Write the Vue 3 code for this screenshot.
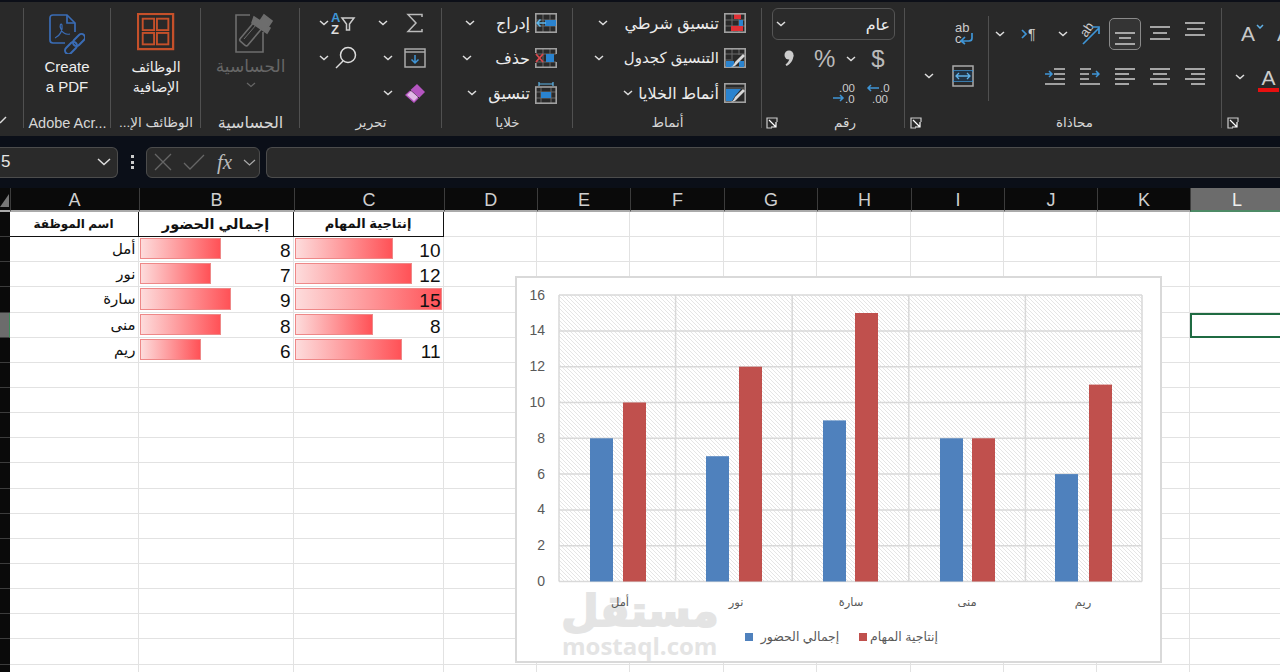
<script setup>
const colLetters = ['A','B','C','D','E','F','G','H','I','J','K','L']
const rowCount = 19
const tableHead = ['اسم الموظفة','إجمالي الحضور','إنتاجية المهام']
const people = [
  { name: 'أمل', a: 8, t: 10 },
  { name: 'نور', a: 7, t: 12 },
  { name: 'سارة', a: 9, t: 15 },
  { name: 'منى', a: 8, t: 8 },
  { name: 'ريم', a: 6, t: 11 }
]
const rows = Array.from({ length: rowCount }, (_, i) => i)
const blankCols = colLetters.slice(3)
const ticks = [16,14,12,10,8,6,4,2,0]
const tickY = v => 305.5 - v * 17.9
const catX = [44,160.6,277.2,393.8,510.4,627]
const blueX = [75,191,308,425,540]
const redX = [108,224,340,457,574]
const alignTop = [
  { cls: 'btn on', ys: [14,19,25], mid: [4,16] },
  { cls: 'btn', ys: [8,14,20], mid: [3,17] },
  { cls: 'btn', ys: [4,10,16], mid: [2,18] }
]
const alignBottom = [
  [[0,20],[0,14],[0,20],[0,14]],
  [[0,20],[3,17],[0,20],[3,17]],
  [[0,20],[6,20],[0,20],[6,20]]
]
</script>

<template>
  <div class="app">
    <div class="ribbon">
      <section class="group g0">
        <div class="body"></div>
        <svg class="cutmark" width="8" height="10"><path d="M0 8l6-6" stroke="#ddd" stroke-width="1.4" fill="none"/></svg>
      </section>

      <section class="group g1">
        <div class="body big">
          <svg width="36" height="40" viewBox="0 0 36 40" fill="none" stroke="#3a6cb5" stroke-width="1.700">
            <path d="M26 18V9l-8-8H4Q1 1 1 4v22q0 3 3 3h12"/><path d="M18 1v8h8"/>
            <path d="M6 24c5-2 8-8 7-13-1-2-3 0-1 4 1 3 4 6 9 5" stroke-width="1.200"/>
            <rect x="23" y="22.500" width="14" height="7" rx="3.500" transform="rotate(-45 30 26)" stroke-width="2"/>
            <rect x="15" y="30.500" width="14" height="7" rx="3.500" transform="rotate(-45 22 34)" stroke-width="2"/>
          </svg>
          <span class="bigtext">Create<br>a PDF</span>
        </div>
        <div class="label lat">Adobe Acr...</div>
      </section>

      <section class="group g2">
        <div class="body big">
          <svg width="38" height="38" viewBox="0 0 40 40" fill="none" stroke="#c5502a" stroke-width="2">
            <rect x="1" y="1" width="37" height="37" stroke-width="2.4"/>
            <rect x="6" y="6" width="12" height="12"/><rect x="21" y="6" width="12" height="12"/>
            <rect x="6" y="21" width="12" height="12"/><rect x="21" y="21" width="12" height="12"/>
          </svg>
          <span class="bigtext ar" dir="rtl">الوظائف<br>الإضافية</span>
        </div>
        <div class="label" dir="rtl">الوظائف الإ...</div>
      </section>

      <section class="group g3">
        <div class="body big dim">
          <svg class="sens" width="38" height="40" viewBox="0 0 38 40" fill="none" stroke="#6d6d6d" stroke-width="1.600">
            <path d="M15 2H1v37h27V19"/>
            <rect x="3" y="15" width="27" height="10" rx="2" transform="rotate(-50 16.500 20)"/>
            <path d="M9 26l12-14" stroke-width="1"/>
            <path d="M19 4l6 4 4-6 8 6-4 6 2 1-3 5-15-10z" fill="#6d6d6d"/>
          </svg>
          <span class="bigtext ar dimtext" dir="rtl">الحساسية</span>
          <svg class="chev dimchev" width="10" height="6"><path d="M1 1l4 3.5L9 1" stroke="#666" stroke-width="1.2" fill="none"/></svg>
        </div>
        <div class="label wide" dir="rtl">الحساسية</div>
      </section>

      <section class="group g4">
        <div class="body edit">
          <svg class="chev" width="10" height="6"><path d="M1 1l4 3.5L9 1" stroke="#ddd" stroke-width="1.5" fill="none"/></svg>
          <svg width="26" height="26" viewBox="0 0 26 26">
            <text x="1" y="12" class="az blue">A</text><text x="1" y="24" class="az">Z</text>
            <path d="M12 8h12l-4.500 6v6h-3v-6z" fill="none" stroke="#ccc" stroke-width="1.500"/>
          </svg>
          <span></span>
          <svg class="chev shiftl" width="10" height="6"><path d="M1 1l4 3.5L9 1" stroke="#ddd" stroke-width="1.5" fill="none"/></svg>
          <svg width="18" height="20" viewBox="0 0 18 20"><path d="M16 4V1.500H2l8 8.500-8 8.500h14V16" fill="none" stroke="#bbb" stroke-width="1.500"/></svg>

          <svg class="chev" width="10" height="6"><path d="M1 1l4 3.5L9 1" stroke="#ddd" stroke-width="1.5" fill="none"/></svg>
          <svg class="mag" width="24" height="24" viewBox="0 0 24 24" fill="none" stroke="#ddd" stroke-width="1.500"><circle cx="14" cy="9" r="7.500"/><path d="M9 15l-7 7"/></svg>
          <span></span>
          <svg class="chev" width="10" height="6"><path d="M1 1l4 3.5L9 1" stroke="#ddd" stroke-width="1.5" fill="none"/></svg>
          <svg width="22" height="20" viewBox="0 0 22 20" fill="none" stroke="#aaa" stroke-width="1.500"><rect x="1" y="1" width="20" height="18"/><path d="M1 4h20"/><path d="M11 7v8M7.500 11.500l3.500 3.500 3.500-3.500" stroke="#3f95d6"/></svg>

          <span></span><span></span><span></span>
          <svg class="chev" width="10" height="6"><path d="M1 1l4 3.500L9 1" stroke="#ddd" stroke-width="1.5" fill="none"/></svg>
          <svg width="22" height="20" viewBox="0 0 22 20"><path d="M1 12l9 8 11-11-8-8z" fill="#b455c0"/><path d="M6 7l9 8" stroke="#2a2a2a" stroke-width="1"/><path d="M3 12l7 6 4-4-7-6z" fill="#e0b8e6"/></svg>
        </div>
        <div class="label" dir="rtl">تحرير</div>
      </section>

      <section class="group g5">
        <div class="body lists">
          <div class="li w1">
            <svg class="chev" width="10" height="6"><path d="M1 1l4 3.5L9 1" stroke="#ddd" stroke-width="1.5" fill="none"/></svg>
            <span class="txt" dir="rtl">إدراج</span>
            <svg width="22" height="20" viewBox="0 0 22 20"><path d="M8 1v18M15 1v18M1 7h20M1 13h20" stroke="#6a6a6a"/><rect x=".8" y=".8" width="20.400" height="18.400" fill="none" stroke="#a0a0a0" stroke-width="1.600"/><rect x="10" y="7" width="11" height="6" fill="#2a83cf"/><path d="M11 10H2M5.500 6.500L2 10l3.500 3.500" stroke="#5fb6ea" stroke-width="1.500" fill="none"/></svg>
          </div>
          <div class="li w2">
            <svg class="chev" width="10" height="6"><path d="M1 1l4 3.5L9 1" stroke="#ddd" stroke-width="1.5" fill="none"/></svg>
            <span class="txt" dir="rtl">حذف</span>
            <svg width="22" height="20" viewBox="0 0 22 20"><path d="M8 1v18M15 1v18M1 6h20M1 14h20" stroke="#6a6a6a"/><path d="M.8 5V.8h20.400V6M21.200 14v5.200H.8V15" fill="none" stroke="#a0a0a0" stroke-width="1.600"/><rect x="11" y="6" width="8" height="8" fill="#2a83cf"/><path d="M1 6l7 8M8 6l-7 8" stroke="#d9484d" stroke-width="1.800"/></svg>
          </div>
          <div class="li w3">
            <svg class="chev" width="10" height="6"><path d="M1 1l4 3.5L9 1" stroke="#ddd" stroke-width="1.5" fill="none"/></svg>
            <span class="txt" dir="rtl">تنسيق</span>
            <svg width="22" height="22" viewBox="0 0 22 22"><path d="M1 10h20M1 16h20M6 5v16M16 5v16" stroke="#6a6a6a"/><rect x=".8" y="5" width="20.400" height="16.200" fill="none" stroke="#a0a0a0" stroke-width="1.600"/><rect x="6" y="10" width="10" height="6" fill="#2a83cf"/><path d="M4 2h14M4 0v4M18 0v4" stroke="#5fb6ea" stroke-width="1.200"/></svg>
          </div>
        </div>
        <div class="label" dir="rtl">خلايا</div>
      </section>

      <section class="group g6">
        <div class="body lists">
          <div class="li s1">
            <svg class="chev" width="10" height="6"><path d="M1 1l4 3.5L9 1" stroke="#ddd" stroke-width="1.5" fill="none"/></svg>
            <span class="txt" dir="rtl">تنسيق شرطي</span>
            <svg width="22" height="20" viewBox="0 0 22 20"><path d="M8 1v18M15 1v18M1 7h20M1 13h20" stroke="#6a6a6a"/><rect x="10" y="1" width="7" height="5" fill="#e03035"/><rect x="15" y="7" width="4" height="6" fill="#2a83cf"/><rect x="7" y="13" width="12" height="5" fill="#e03035"/><rect x=".8" y=".8" width="20.400" height="18.400" fill="none" stroke="#a0a0a0" stroke-width="1.600"/></svg>
          </div>
          <div class="li s2">
            <svg class="chev" width="10" height="6"><path d="M1 1l4 3.5L9 1" stroke="#ddd" stroke-width="1.5" fill="none"/></svg>
            <span class="txt" dir="rtl">التنسيق كجدول</span>
            <svg width="22" height="20" viewBox="0 0 22 20"><path d="M8 1v10M15 1v6M1 6h20M1 12h8" stroke="#6a6a6a"/><rect x=".8" y=".8" width="20.400" height="18.400" fill="none" stroke="#a0a0a0" stroke-width="1.600"/><path d="M2 13h8v6H2zM15 13h5v6h-5z" fill="#2a83cf"/><path d="M5 19c3 0 5-2 6-5l8-8 2 2-8 8c-1 2-4 3-8 3z" fill="#d8d8d8"/></svg>
          </div>
          <div class="li s3">
            <svg class="chev" width="10" height="6"><path d="M1 1l4 3.5L9 1" stroke="#ddd" stroke-width="1.5" fill="none"/></svg>
            <span class="txt" dir="rtl">أنماط الخلايا</span>
            <svg width="22" height="20" viewBox="0 0 22 20"><rect x=".8" y=".8" width="20.400" height="18.400" fill="none" stroke="#a0a0a0" stroke-width="1.600"/><path d="M1 5h20" stroke="#6a6a6a"/><path d="M2 6h15l-6 7-3 5H2z" fill="#2a83cf"/><path d="M5 19c3 0 5-2 6-5l8-8 2 2-8 8c-1 2-4 3-8 3z" fill="#d8d8d8"/></svg>
          </div>
        </div>
        <div class="label" dir="rtl">أنماط</div>
      </section>

      <section class="group g7">
        <div class="body num">
          <div class="select">
            <svg class="chev" width="10" height="6"><path d="M1 1l4 3.5L9 1" stroke="#ddd" stroke-width="1.5" fill="none"/></svg>
            <span class="txt" dir="rtl">عام</span>
          </div>
          <div class="numrow n2">
            <svg class="comma" width="12" height="20" viewBox="0 0 12 20"><circle cx="6" cy="6" r="4.500" fill="#ccc"/><path d="M10.500 6c0 5-3 9-7 11l-1-1.500c3-2 4-5 4-7z" fill="#ccc"/></svg>
            <span class="pct">%</span>
            <svg class="chev" width="10" height="6"><path d="M1 1l4 3.5L9 1" stroke="#ddd" stroke-width="1.5" fill="none"/></svg>
            <span class="dollar">$</span>
          </div>
          <div class="numrow n3">
            <svg width="24" height="24" viewBox="0 0 24 24"><text x="7" y="11" class="dec">.00</text><text x="13" y="22" class="dec">.0</text><path d="M1 17h10M8 14l3 3-3 3" stroke="#3f95d6" stroke-width="1.500" fill="none"/></svg>
            <svg width="24" height="24" viewBox="0 0 24 24"><text x="14" y="11" class="dec">.0</text><text x="6" y="22" class="dec">.00</text><path d="M13 7H2M5 4L2 7l3 3" stroke="#3f95d6" stroke-width="1.500" fill="none"/></svg>
          </div>
        </div>
        <div class="label foot f7">
          <svg class="launch" width="12" height="12" viewBox="0 0 12 12" fill="none" stroke="#ccc" stroke-width="1.200"><path d="M11 5V1H1v10h5"/><path d="M3 3l7 7M10 5v5H5" stroke="#fff"/></svg>
          <span dir="rtl">رقم</span>
        </div>
      </section>

      <section class="group g8">
        <div class="body align">
          <div class="wrapcol">
            <svg class="wrapicon" width="22" height="24" viewBox="0 0 22 24"><text x="3" y="11" class="ab">ab</text><text x="3" y="22" class="ab">c</text><path d="M20 12v5q0 3-3 3H10M13 16l-4 4 4 3" stroke="#3f95d6" stroke-width="1.700" fill="none"/></svg>
            <div class="mergerow">
              <svg class="chev" width="10" height="6"><path d="M1 1l4 3.5L9 1" stroke="#ddd" stroke-width="1.5" fill="none"/></svg>
              <svg width="22" height="22" viewBox="0 0 22 22" fill="none"><rect x="1" y="1" width="20" height="20" stroke="#aaa" stroke-width="1.500"/><path d="M1 6h20M1 16h20" stroke="#3f95d6" stroke-width="1.500"/><rect x="2" y="6" width="18" height="10" fill="#234"/><path d="M4 11h14M7 8l-3 3 3 3M15 8l3 3-3 3" stroke="#5fb0e6" stroke-width="1.300"/></svg>
            </div>
          </div>
          <div class="vrule"></div>
          <div class="aligncol">
            <div class="arow">
              <svg class="chev c1" width="10" height="6"><path d="M1 1l4 3.5L9 1" stroke="#ddd" stroke-width="1.5" fill="none"/></svg>
              <svg class="para" width="20" height="16" viewBox="0 0 20 16"><path d="M1 4l4 4-4 4" stroke="#3f95d6" stroke-width="1.700" fill="none"/><text x="7" y="13" class="pil">¶</text></svg>
              <svg class="chev c2" width="10" height="6"><path d="M1 1l4 3.5L9 1" stroke="#ddd" stroke-width="1.5" fill="none"/></svg>
              <svg class="abr" width="24" height="26" viewBox="0 0 24 26"><text x="3" y="15" class="ab" transform="rotate(-55 8 10)">ab</text><path d="M6 23L22 7M15 6h7v7" stroke="#3f95d6" stroke-width="1.700" fill="none"/></svg>
              <div v-for="(b, i) in alignTop" :key="i" :class="b.cls">
                <svg width="20" height="30" viewBox="0 0 20 30"><path v-for="(y, j) in b.ys" :key="j" :d="`M${j === 1 ? b.mid[0] : 0} ${y}H${j === 1 ? b.mid[1] : 20}`" stroke="#c6c6c6" stroke-width="1.600"/></svg>
              </div>
            </div>
            <div class="arow a2">
              <div class="btn">
                <svg width="20" height="20" viewBox="0 0 20 20"><path d="M9 2h11M9 7h11M9 12h11M0 17h20" stroke="#c6c6c6" stroke-width="1.500"/><path d="M0 7h7M4 4l3 3-3 3" stroke="#3f95d6" stroke-width="1.500" fill="none"/></svg>
              </div>
              <div class="btn">
                <svg width="20" height="20" viewBox="0 0 20 20"><path d="M0 2h11M0 7h9M0 12h9M0 17h20" stroke="#c6c6c6" stroke-width="1.500"/><path d="M12 7h7M16 4l3 3-3 3" stroke="#3f95d6" stroke-width="1.500" fill="none"/></svg>
              </div>
              <div v-for="(set, i) in alignBottom" :key="i" class="btn">
                <svg width="20" height="20" viewBox="0 0 20 20"><path v-for="(l, j) in set" :key="j" :d="`M${l[0]} ${2 + j * 5}H${l[1]}`" stroke="#c6c6c6" stroke-width="1.600"/></svg>
              </div>
            </div>
          </div>
        </div>
        <div class="label foot f8">
          <svg class="launch" width="12" height="12" viewBox="0 0 12 12" fill="none" stroke="#ccc" stroke-width="1.200"><path d="M11 5V1H1v10h5"/><path d="M3 3l7 7M10 5v5H5" stroke="#fff"/></svg>
          <span dir="rtl">محاذاة</span>
        </div>
      </section>

      <section class="group g9">
        <div class="body fontg">
          <div class="frow">
            <span class="fa">A</span><svg class="up" width="8" height="5"><path d="M1 1l3 3 3-3" stroke="#5fb0e6" stroke-width="1.500" fill="none"/></svg>
            <span class="fa second">A</span>
          </div>
          <div class="frow f2">
            <svg class="chev" width="10" height="6"><path d="M1 1l4 3.5L9 1" stroke="#ddd" stroke-width="1.5" fill="none"/></svg>
            <span class="fa redA">A</span>
          </div>
        </div>
        <div class="label foot f9">
          <svg class="launch" width="12" height="12" viewBox="0 0 12 12" fill="none" stroke="#ccc" stroke-width="1.200"><path d="M11 5V1H1v10h5"/><path d="M3 3l7 7M10 5v5H5" stroke="#fff"/></svg>
        </div>
      </section>
    </div>

    <div class="formula">
      <div class="namebox">
        <span>5</span>
        <svg width="14" height="8"><path d="M1 1l6 5.500L13 1" stroke="#ddd" stroke-width="1.500" fill="none"/></svg>
      </div>
      <div class="dots"><i></i><i></i><i></i></div>
      <div class="fxbox">
        <svg width="18" height="18" viewBox="0 0 18 18"><path d="M1 1l16 16M17 1L1 17" stroke="#666" stroke-width="1.300"/></svg>
        <svg class="chk" width="22" height="16" viewBox="0 0 22 16"><path d="M1 9l6 6L21 1" stroke="#666" stroke-width="1.300" fill="none"/></svg>
        <span class="fx">fx</span>
        <svg width="13" height="7"><path d="M1 1l5.500 5L12 1" stroke="#aaa" stroke-width="1.200" fill="none"/></svg>
      </div>
      <div class="fbar"></div>
    </div>

    <div class="sheet">
      <div class="corner"><svg width="9" height="14"><path d="M9 1v13H0z" fill="#777"/></svg></div>
      <div v-for="c in colLetters" :key="c" class="colhead" :class="{ sel: c === 'L' }">{{ c }}</div>

      <template v-for="r in rows" :key="r">
        <div class="rowhead" :class="{ sel: r === 4 }"></div>

        <template v-if="r === 0">
          <div v-for="(h, i) in tableHead" :key="h" class="cell th" :class="'th' + i" dir="rtl">{{ h }}</div>
        </template>
        <template v-else-if="r <= 5">
          <div class="cell td name" dir="rtl">{{ people[r - 1].name }}</div>
          <div class="cell td val">
            <div class="databar" :style="{ width: people[r - 1].a * 10 + 1 + 'px' }"></div>
            <span>{{ people[r - 1].a }}</span>
          </div>
          <div class="cell td val">
            <div class="databar" :style="{ width: people[r - 1].t * 9.8 + 'px' }"></div>
            <span>{{ people[r - 1].t }}</span>
          </div>
        </template>
        <template v-else>
          <div class="cell"></div><div class="cell"></div><div class="cell"></div>
        </template>

        <div v-for="c in blankCols" :key="c" class="cell" :class="{ active: c === 'L' && r === 4 }"></div>
      </template>

      <div class="chart">
        <svg width="647" height="387" viewBox="0 0 647 387">
          <defs>
            <pattern id="hatch" width="4" height="4" patternUnits="userSpaceOnUse">
              <path d="M-1-1l6 6M-1 3l2 2M3-1l2 2" stroke="#e2e2e2" stroke-width=".9"/>
            </pattern>
          </defs>
          <rect x="44" y="19" width="583" height="286.500" fill="url(#hatch)"/>
          <line v-for="v in ticks" :key="v" x1="44" x2="627" :y1="tickY(v)" :y2="tickY(v)" class="gl"/>
          <line v-for="x in catX" :key="x" :x1="x" :x2="x" y1="19" y2="305.500" class="gl"/>
          <text v-for="v in ticks" :key="'t' + v" x="30" :y="tickY(v) + 4.500" class="ytick">{{ v }}</text>
          <g v-for="(p, i) in people" :key="p.name">
            <rect :x="blueX[i]" :y="tickY(p.a)" width="23" :height="p.a * 17.9" fill="#4f81bd"/>
            <rect :x="redX[i]" :y="tickY(p.t)" width="23" :height="p.t * 17.9" fill="#c0504d"/>
          </g>
          <text x="125" y="350" class="wm1">مستقل</text>
          <text x="47" y="379" class="wm2">mostaql.com</text>
          <text x="105" y="330" class="cat">أمل</text>
          <text x="221" y="330" class="cat">نور</text>
          <text x="336" y="330" class="cat">سارة</text>
          <text x="452" y="330" class="cat">منى</text>
          <text x="568" y="330" class="cat">ريم</text>
          <rect x="230" y="357" width="8" height="8" fill="#4f81bd"/>
          <text x="285" y="365" class="cat leg">إجمالي الحضور</text>
          <rect x="344" y="357" width="8" height="8" fill="#c0504d"/>
          <text x="389" y="365" class="cat leg">إنتاجية المهام</text>
        </svg>
      </div>
    </div>
  </div>
</template>

<style>
html, body { margin: 0; padding: 0; background: #fff; overflow: hidden; }
</style>

<style scoped>
.app { width: 1280px; height: 672px; overflow: hidden; font-family: "Liberation Sans", "DejaVu Sans", sans-serif; background: #fff; }
svg { display: block; flex: none; }

.ribbon { height: 134px; border-top: 2px solid #0c0f18; background: #292929; display: flex; color: #e6e6e6; overflow: hidden; }
.group { position: relative; display: flex; flex-direction: column; flex: none; padding-top: 6px; box-sizing: border-box; }
.group::after { content: ""; position: absolute; right: 0; top: 6px; height: 120px; width: 1px; background: #505050; }
.g0 { width: 24px; } .g1 { width: 87px; } .g2 { width: 90px; } .g3 { width: 99px; } .g4 { width: 142px; }
.g5 { width: 131px; } .g6 { width: 189px; } .g7 { width: 143px; } .g8 { width: 317px; } .g9 { width: 59px; }
.g9::after { display: none; }
.cutmark { position: absolute; left: 0; top: 113px; }
.body { height: 102px; box-sizing: border-box; }
.label { height: 22px; font-size: 13.500px; line-height: 22px; text-align: center; color: #d6d6d6; white-space: nowrap; padding-top: 2px; }
.label.lat { font-size: 14.500px; }
.label.wide { font-size: 16px; }
.big { display: flex; flex-direction: column; align-items: center; padding-top: 5px; }
.g1 .big { padding-top: 6px; padding-right: 1px; }
.bigtext { margin-top: 4px; font-size: 15px; line-height: 20px; text-align: center; color: #eee; }
.g1 .bigtext { margin-top: 3px; }
.g2 .bigtext { margin-top: 6px; }
.bigtext.ar { font-size: 14px; }
.dimtext { color: #666; font-size: 17px !important; }
.dimchev { margin-top: 5px; }
.g3 .big { padding-top: 5px; }
.sens { margin-left: 6px; }

.edit { display: grid; grid-template-columns: 10px 28px 26px 10px 44px; grid-template-rows: 35px 35px 35px; align-items: center; justify-items: center; padding-left: 19px; margin-top: -3px; margin-bottom: 3px; }
.shiftl { margin-left: -10px; }
.mag { margin-left: 5px; }

.lists { display: flex; flex-direction: column; margin-top: -2.500px; margin-bottom: 2.500px; }
.li { flex: none; height: 35px; display: flex; align-items: center; justify-content: flex-end; padding-right: 16px; }
.txt { font-size: 16px; color: #ececec; white-space: nowrap; }
.li .chev { margin-right: auto; }
.li svg:last-child { margin-left: 5px; }
.w1 .chev { margin-left: 23px; } .w2 .chev { margin-left: 20px; } .w3 .chev { margin-left: 25px; }
.s1 .chev { margin-left: 25px; } .s2 .chev { margin-left: 21px; } .s3 .chev { margin-left: 50px; }
.s2 .txt { font-size: 15px; }

.num { padding: 0 10px 0 10px; }
.select { height: 32px; box-sizing: border-box; border: 1px solid #555; border-radius: 6px; display: flex; justify-content: space-between; align-items: center; padding: 0 4px 0 3px; background: #2b2b2b; }
.numrow { display: flex; align-items: center; }
.n2 { height: 38px; padding-left: 11px; }
.pct { font-size: 24px; color: #bbb; margin-left: 19px; }
.n2 .chev { margin-left: 11px; }
.dollar { font-size: 24px; color: #bbb; margin-left: 15px; }
.n3 { height: 30px; justify-content: flex-end; gap: 10px; padding-right: 5px; }
.dec { font: 11.500px "Liberation Sans", sans-serif; fill: #ccc; }
.foot { display: flex; align-items: center; position: relative; }
.launch { position: absolute; top: 7px; }
.f7 .launch { left: 4px; } .f7 span { margin-left: 72px; }
.f8 .launch { left: 5px; } .f8 span { margin-left: 151px; }
.f9 .launch { left: 5px; }

.align { display: flex; padding-top: 4px; }
.wrapcol { width: 83px; display: flex; flex-direction: column; align-items: flex-end; padding-right: 14px; box-sizing: border-box; }
.wrapicon { margin-top: 9px; margin-bottom: 20px; }
.mergerow { display: flex; align-items: center; gap: 18px; }
.vrule { width: 1px; height: 85px; background: #505050; flex: none; margin-top: 4px; }
.aligncol { flex: 1; display: flex; flex-direction: column; padding-right: 11px; }
.arow { display: flex; height: 43px; align-items: center; justify-content: flex-end; gap: 3px; }
.btn { width: 32px; height: 32px; box-sizing: border-box; display: flex; align-items: center; justify-content: center; border: 1px solid transparent; border-radius: 5px; flex: none; }
.btn.on { border-color: #8a8a8a; background: #343434; }
.c1 { margin-right: 13px; } .c2 { margin-left: 14px; margin-right: 6px; } .abr { margin-right: 5px; overflow: visible; }
.ab { font: 13px "Liberation Sans", sans-serif; fill: #ccc; }
.az { font: bold 13px "Liberation Sans", sans-serif; fill: #ddd; }
.az.blue { fill: #3f95d6; }
.pil { font: 14px "Liberation Sans", sans-serif; fill: #ccc; }

.fontg { padding: 4px 0 0 0; }
.frow { height: 43px; display: flex; align-items: center; padding-left: 19px; position: relative; }
.fa { font-size: 21px; color: #c8c8c8; }
.up { align-self: flex-start; margin-top: 12px; margin-left: 1px; }
.second { margin-left: 13px; }
.frow.f2 { padding-left: 13px; }
.redA { margin-left: 13px; border-bottom: 4px solid #e81010; width: 21px; box-sizing: border-box; text-align: center; line-height: 20px; margin-top: 6px; color: #ccc; }

.formula { height: 52px; background: #0b0f18; display: flex; align-items: center; box-sizing: border-box; }
.namebox { width: 118px; height: 31px; box-sizing: border-box; border: 1px solid #4c4c4c; border-left: 0; border-radius: 0 6px 6px 0; background: #2a2a2a; display: flex; align-items: center; justify-content: space-between; padding: 0 6px 0 1px; color: #e6e6e6; font-size: 17px; }
.dots { width: 28px; display: flex; flex-direction: column; align-items: center; gap: 2.500px; }
.dots i { width: 3px; height: 3px; background: #ccc; display: block; }
.fxbox { width: 114px; height: 31px; box-sizing: border-box; border: 1px solid #4c4c4c; border-radius: 6px; background: #2a2a2a; display: flex; align-items: center; padding: 0 0 0 7px; }
.chk { margin-left: 11px; }
.fx { font: italic 21px "Liberation Serif", serif; color: #bbb; margin-left: 12px; width: 20px; }
.fxbox svg:last-child { margin-left: 6px; }
.fbar { flex: 1; margin-left: 6px; height: 31px; box-sizing: border-box; border: 1px solid #4c4c4c; border-right: 0; border-radius: 6px 0 0 6px; background: #2a2a2a; }

.sheet { position: relative; display: grid; grid-template-columns: 9.500px 129px 155px 150px 93.500px 93px 94px 93px 94px 93px 93px 93px 93px; grid-template-rows: 24px; grid-auto-rows: 25.150px; }
.corner { background: #0a0a0a; border-bottom: 2px solid #aaa; box-sizing: border-box; }
.corner svg { margin-top: 5px; }
.colhead { background: #0a0a0a; color: #cfcfcf; font-size: 18px; line-height: 24px; text-align: center; border-bottom: 2px solid #aaa; border-left: 1px solid #3c3c3c; box-sizing: border-box; }
.colhead.sel { background: #6c6c6c; color: #eee; border-bottom-color: #4d8a66; }
.rowhead { background: #0a0a0a; border-bottom: 1px solid #3c3c3c; box-sizing: border-box; }
.rowhead.sel { background: #6c6c6c; border-right: 1px solid #3d8a5a; }
.cell { border-right: 1px solid #e2e2e2; border-bottom: 1px solid #e2e2e2; box-sizing: border-box; position: relative; min-width: 0; }
.cell.active { border: 2px solid #1f6b42; }
.th { border: 1px solid #111; border-top: 0; border-left: 0; font-weight: bold; text-align: center; line-height: 24px; color: #111; white-space: nowrap; }
.th0 { font-size: 12px; } .th1 { font-size: 14.500px; } .th2 { font-size: 13px; }
.td { color: #111; font-size: 19px; line-height: 27px; }
.td.name { font-size: 15px; padding-right: 2px; line-height: 24px; }
.val { text-align: right; padding-right: 2px; }
.val span { position: relative; }
.databar { position: absolute; left: 1px; top: 1px; bottom: 2px; background: linear-gradient(90deg, #fddcdc, #ff5257); border: 1px solid #e88; box-sizing: border-box; }
.chart { position: absolute; left: 515px; top: 88px; width: 647px; height: 387px; box-sizing: border-box; background: #fff; outline: 2px solid #d9d9d9; outline-offset: -2px; }
.gl { stroke: #d9d9d9; stroke-width: 1.500; }
.ytick { font: 14px "Liberation Sans", sans-serif; fill: #595959; text-anchor: end; }
.cat { font: 11.500px "Liberation Sans", "DejaVu Sans", sans-serif; fill: #595959; text-anchor: middle; direction: rtl; }
.cat.leg { font-size: 12.500px; }
.wm1 { font: bold 43px "DejaVu Sans", sans-serif; fill: #e4e4e4; stroke: #e4e4e4; stroke-width: 2; text-anchor: middle; direction: rtl; }
.wm2 { font: bold 24px "Open Sans", sans-serif; fill: #e4e4e4; }
</style>
